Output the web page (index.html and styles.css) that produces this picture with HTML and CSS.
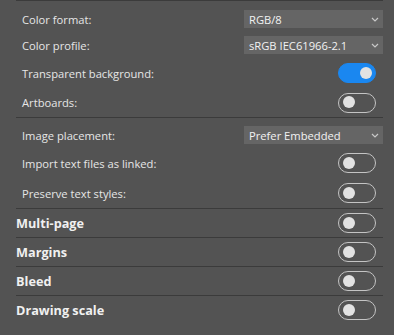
FILE: index.html
```html
<!DOCTYPE html>
<html>
<head>
<meta charset="utf-8">
<link rel="stylesheet" href="styles.css">
</head>
<body>
<div class="panel">
  <div class="group first">
    <div class="row drow">
      <span class="label">Color format:</span>
      <div class="select"><span>RGB/8</span><svg class="chev" width="8" height="5" viewBox="0 0 8 5"><path d="M1 1 L4 4 L7 1" fill="none" stroke="#c8c8c8" stroke-width="1.2"/></svg></div>
    </div>
    <div class="row drow">
      <span class="label">Color profile:</span>
      <div class="select"><span>sRGB IEC61966-2.1</span><svg class="chev" width="8" height="5" viewBox="0 0 8 5"><path d="M1 1 L4 4 L7 1" fill="none" stroke="#c8c8c8" stroke-width="1.2"/></svg></div>
    </div>
    <div class="row trow">
      <span class="label">Transparent background:</span>
      <div class="toggle on"><span class="knob"></span></div>
    </div>
    <div class="row trow last">
      <span class="label">Artboards:</span>
      <div class="toggle"><span class="knob"></span></div>
    </div>
  </div>
  <div class="group second">
    <div class="row drow">
      <span class="label">Image placement:</span>
      <div class="select"><span>Prefer Embedded</span><svg class="chev" width="8" height="5" viewBox="0 0 8 5"><path d="M1 1 L4 4 L7 1" fill="none" stroke="#c8c8c8" stroke-width="1.2"/></svg></div>
    </div>
    <div class="row trow">
      <span class="label">Import text files as linked:</span>
      <div class="toggle"><span class="knob"></span></div>
    </div>
    <div class="row trow">
      <span class="label">Preserve text styles:</span>
      <div class="toggle"><span class="knob"></span></div>
    </div>
  </div>
  <div class="section">
    <span class="title">Multi-page</span>
    <div class="toggle"><span class="knob"></span></div>
  </div>
  <div class="section">
    <span class="title">Margins</span>
    <div class="toggle"><span class="knob"></span></div>
  </div>
  <div class="section">
    <span class="title">Bleed</span>
    <div class="toggle"><span class="knob"></span></div>
  </div>
  <div class="section">
    <span class="title">Drawing scale</span>
    <div class="toggle"><span class="knob"></span></div>
  </div>
</div>
</body>
</html>
```

FILE: styles.css
```css
html, body {
  margin: 0;
  padding: 0;
  background: #535353;
}
body {
  font-family: "Open Sans", "Noto Sans", sans-serif;
  color: #e6e6e6;
  height: 335px;
  overflow: hidden;
}
.panel {
  padding: 0 11px 0 16px;
}
.group {
  border-top: 1px solid #3b3b3b;
  padding-left: 6px;
}
.group.first {
  padding-top: 5px;
}
.group.second {
  padding-top: 4px;
}
.row {
  display: flex;
  align-items: center;
  justify-content: space-between;
}
.drow {
  height: 26px;
}
.trow {
  height: 30px;
}
.trow.last {
  height: 29px;
}
.label {
  font-size: 11.2px;
}
.select {
  width: 139px;
  height: 18px;
  background: #656565;
  display: flex;
  align-items: center;
  justify-content: space-between;
  padding: 0 4px 0 5px;
  box-sizing: border-box;
  font-size: 11.2px;
  color: #f2f2f2;
}
.chev {
  display: block;
}
.toggle {
  width: 38px;
  height: 20px;
  box-sizing: border-box;
  border: 1.5px solid #c4c4c4;
  border-radius: 10px;
  margin-right: 7px;
  position: relative;
}
.knob {
  position: absolute;
  width: 12px;
  height: 12px;
  border-radius: 50%;
  background: #e2e2e2;
  top: 2.5px;
  left: 3.5px;
}
.toggle.on {
  background: #1a87f0;
  border-color: #1a87f0;
}
.toggle.on .knob {
  left: auto;
  right: 3.5px;
}
.section {
  border-top: 1px solid #3b3b3b;
  height: 28px;
  display: flex;
  align-items: center;
  justify-content: space-between;
}
.title {
  font-size: 12.7px;
  font-weight: 700;
  color: #f0f0f0;
}
```
